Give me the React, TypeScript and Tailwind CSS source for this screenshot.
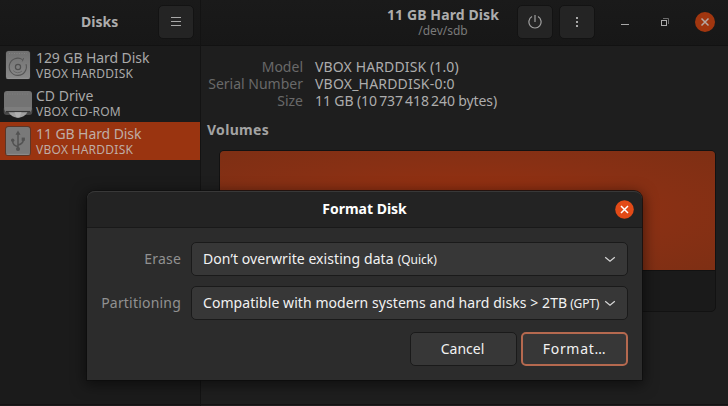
import type { ReactNode } from 'react';

function HardDiskIcon() {
  return (
    <svg width="36" height="38" viewBox="0 0 36 38" className="shrink-0">
      <defs>
        <linearGradient id="hdd" x1="0" y1="0" x2="0" y2="1">
          <stop offset="0" stopColor="#707070" />
          <stop offset="1" stopColor="#8a8a8a" />
        </linearGradient>
      </defs>
      <rect x="5.5" y="4.5" width="25" height="29" rx="3" fill="#2a2a2a" />
      <rect x="6" y="5" width="24" height="28" rx="2.5" fill="url(#hdd)" />
      <path d="M6.5 32.3h23" stroke="#9a9a9a" strokeWidth="0.7" />
      <path d="M9 7.5h18" stroke="#828282" strokeDasharray="1 1.5" />
      <path d="M22.5 13.6A8.6 8.6 0 1 0 26 18.2" fill="none" stroke="#555" strokeWidth="1.1" />
      <path d="M23.6 12.2l-1.3 3.2" stroke="#555" strokeWidth="1" />
      <path d="M13.2 24.6a6 6 0 0 0 8.8.4" fill="none" stroke="#686868" />
      <circle cx="18" cy="21" r="2.6" fill="none" stroke="#505050" strokeWidth="1.2" />
    </svg>
  );
}

function CdDriveIcon() {
  return (
    <svg width="36" height="38" viewBox="0 0 36 38" className="shrink-0">
      <rect x="3.7" y="22" width="28.6" height="9" rx="3" fill="#494949" />
      <rect x="4" y="7" width="28" height="20.5" rx="3" fill="#737373" />
      <path d="M5 23h26v4.5H5z" fill="#7d7d7d" />
      <path d="M7 10h22" stroke="#7f7f7f" strokeDasharray="1 1.5" />
      <path d="M6 27.6h24" stroke="#353535" strokeWidth="1.3" />
      <path d="M8.5 28.2h19c-2 3.4-5.3 5.5-9.5 5.5s-7.5-2.1-9.500-5.500z" fill="#a0a0a0" />
      <path d="M14.5 28.2h7l-2 5.3h-3z" fill="#b0b0b0" />
    </svg>
  );
}

function UsbDiskIcon() {
  return (
    <svg width="36" height="38" viewBox="0 0 36 38" className="shrink-0">
      <rect x="5" y="4" width="26" height="30" rx="3.5" fill="#5b3628" />
      <rect x="6" y="5" width="24" height="28" rx="2.5" fill="#797979" />
      <path d="M6.5 32.3h23" stroke="#999" strokeWidth="0.7" />
      <g stroke="#525252" strokeWidth="1.5" fill="none">
        <path d="M18 11v16" />
        <path d="M18 24.5c-3.5-.7-5.300-2-5.300-5.300" />
        <path d="M18 23c3.500-.7 5.300-2 5.300-5.500" />
      </g>
      <path d="M18 8.600l2.500 4.200h-5z" fill="#525252" />
      <circle cx="18" cy="27" r="2" fill="#525252" />
      <circle cx="12.700" cy="18.300" r="1.700" fill="#525252" />
      <rect x="21.700" y="15.600" width="3.200" height="3.200" fill="#525252" />
    </svg>
  );
}

function HeaderButton({ children, label }: { children: ReactNode; label: string }) {
  return (
    <button
      aria-label={label}
      className="flex h-[34px] w-9 shrink-0 items-center justify-center rounded-[5px] border border-[#131313] bg-[#242424]"
    >
      {children}
    </button>
  );
}

function DriveRow({ icon, title, sub, selected }: { icon: ReactNode; title: ReactNode; sub: ReactNode; selected?: boolean }) {
  return (
    <div className={'flex h-[38px] ' + (selected ? 'bg-[#9a3410] text-[#bfada6]' : 'text-[#a9a9a9]')}>
      {icon}
      <div className="pt-0.5 whitespace-nowrap">
        <div className="text-sm leading-[19px]">{title}</div>
        <div className="text-xs leading-[13px] tracking-[0.25px]">{sub}</div>
      </div>
    </div>
  );
}

function Chevron() {
  return (
    <svg width="12" height="12" viewBox="0 0 12 12" className="shrink-0">
      <path d="M1.2 4.2l4.8 4 4.8-4" fill="none" stroke="#d6d6d6" strokeWidth="1.2" />
    </svg>
  );
}

function Combo({ children, note, tight }: { children: ReactNode; note: ReactNode; tight?: boolean }) {
  return (
    <div className="flex h-[34px] w-[437px] items-center rounded-[5px] border border-[#1a1a1a] bg-[#373737] px-[11px] whitespace-nowrap text-[#f2f2f2]">
      <div className="flex flex-1 items-baseline gap-1 leading-[19px]">
        <span className="text-sm tracking-[0.07px]">{children}</span>
        <span className={tight ? '-ml-px text-xs tracking-[-0.2px]' : 'text-xs'}>{note}</span>
      </div>
      <Chevron />
    </div>
  );
}

function FormatDialog() {
  return (
    <div className="absolute top-[191px] left-[87px] flex h-[189px] w-[555px] flex-col rounded-t-[8px] bg-[#2c2c2c] shadow-[0_3px_14px_2px_rgba(0,0,0,0.5),0_0_0_1px_rgba(20,20,20,0.8)]">
      <div className="grid h-[37px] shrink-0 grid-cols-[1fr_auto_1fr] items-center rounded-t-[8px] border-t border-b border-t-[#383838] border-b-[#191919] bg-[#232323]">
        <span />
        <span className="pb-0.5 text-sm leading-[19px] font-bold text-white">Format Disk</span>
        <button aria-label="Close" className="mr-[8.5px] justify-self-end pb-px">
          <svg width="19" height="19" viewBox="0 0 19 19" className="block">
            <circle cx="9.5" cy="9.5" r="9.3" fill="#e24a17" />
            <path d="M6 6l7 7M13 6l-7 7" stroke="#fff" strokeWidth="1.5" />
          </svg>
        </button>
      </div>
      <div className="flex flex-col gap-2.5 pt-3.5">
        <div className="flex items-center">
          <span className="w-[94px] text-right text-sm tracking-[0.2px] text-[#919191]">Erase</span>
          <div className="ml-2.5"><Combo note="(Quick)">Don’t overwrite existing data</Combo></div>
        </div>
        <div className="flex items-center">
          <span className="w-[94px] text-right text-sm tracking-[0.2px] text-[#919191]">Partitioning</span>
          <div className="ml-2.5"><Combo note="(GPT)" tight>Compatible with modern systems and hard disks &gt; 2TB</Combo></div>
        </div>
      </div>
      <div className="mt-3 mr-3.5 flex justify-end gap-1 text-sm text-[#f2f2f2]">
        <button className="h-[34px] w-[107px] rounded-[5px] border border-[#1a1a1a] bg-[#373737] pr-0.5">Cancel</button>
        <button className="h-[34px] w-[107px] rounded-[5px] border-2 border-[#b5694f] bg-[#373737] tracking-[0.7px]">Format…</button>
      </div>
    </div>
  );
}

function InfoRow({ label, children }: { label: string; children: ReactNode }) {
  return (
    <div className="flex h-[17px] text-sm leading-[17px] whitespace-nowrap">
      <span className="w-[102px] text-right text-[#696969]">{label}</span>
      <span className="ml-3 text-[#adadad]">{children}</span>
    </div>
  );
}

export default function App() {
  return (
    <div className="relative flex h-[406px] w-[728px] overflow-hidden bg-[#1e1e1e] font-['Noto_Sans','Open_Sans',sans-serif]">
      <aside className="flex w-[201px] shrink-0 flex-col border-r border-[#131313] bg-[#1b1b1b]">
        <header className="flex h-[46px] items-start border-b border-[#121212] bg-linear-to-b from-[#1a1a1a] to-[#171717] pt-[5px]">
          <div className="flex-1 pt-[7px] pl-[81px] text-sm leading-[19px] font-bold text-[#adadad]">Disks</div>
          <div className="mr-1.5">
            <HeaderButton label="Menu">
              <svg width="10" height="10" viewBox="0 0 10 10" shapeRendering="crispEdges">
                <path d="M0 .5h10M0 4.5h10M0 8.5h10" stroke="#a8a8a8" />
              </svg>
            </HeaderButton>
          </div>
        </header>
        <DriveRow icon={<HardDiskIcon />} title={<span className="tracking-[-0.08px]">129 GB Hard Disk</span>} sub="VBOX HARDDISK" />
        <DriveRow icon={<CdDriveIcon />} title="CD Drive" sub="VBOX CD-ROM" />
        <DriveRow icon={<UsbDiskIcon />} title={<span className="tracking-[-0.08px]">11 GB Hard Disk</span>} sub="VBOX HARDDISK" selected />
      </aside>

      <main className="flex flex-1 flex-col">
        <header className="flex h-[46px] shrink-0 items-start border-b border-[#121212] bg-linear-to-b from-[#1a1a1a] to-[#171717] pt-[5px]">
          <div className="ml-[142px] w-[200px] text-center whitespace-nowrap">
            <div className="text-sm leading-[19px] font-bold tracking-[0.1px] text-[#adadad]">11 GB Hard Disk</div>
            <div className="text-xs leading-[13px] text-[#7a7a7a]">/dev/sdb</div>
          </div>
          <div className="-ml-[26px] flex gap-1.5">
            <HeaderButton label="Power">
              <svg width="14" height="14" viewBox="0 0 14 14">
                <path d="M4 1.6a6.1 6.1 0 1 0 6 0M7 0v7" fill="none" stroke="#a0a0a0" strokeWidth="1.2" />
              </svg>
            </HeaderButton>
            <HeaderButton label="Drive options">
              <svg width="2" height="10" viewBox="0 0 2 10" shapeRendering="crispEdges">
                <path d="M0 0h2v2H0zM0 4h2v2H0zM0 8h2v2H0z" fill="#a8a8a8" />
              </svg>
            </HeaderButton>
          </div>
          <svg width="96" height="34" viewBox="0 0 96 34" className="ml-6">
            <path d="M2 19.5h8" stroke="#a8a8a8" />
            <path d="M44 13.5h5.5v5.5" fill="none" stroke="#6c6c6c" />
            <rect x="42.5" y="15.5" width="5" height="5" fill="none" stroke="#adadad" />
            <circle cx="86" cy="17" r="10" fill="#a1360f" />
            <path d="M82.5 13.5l7 7M89.5 13.5l-7 7" stroke="#b5a8a3" strokeWidth="1.5" />
          </svg>
        </header>
        <section className="pt-3">
          <InfoRow label="Model"><span className="tracking-[0.13px]">VBOX HARDDISK (1.0)</span></InfoRow>
          <InfoRow label="Serial Number"><span className="tracking-[0.2px]">VBOX_HARDDISK-0:0</span></InfoRow>
          <InfoRow label="Size"><span className="tracking-[-0.1px]">11 GB (10{'\u2009'}737{'\u2009'}418{'\u2009'}240 bytes)</span></InfoRow>
        </section>
        <h2 className="mt-[11px] ml-1.5 text-sm leading-[19px] font-bold tracking-[0.3px] text-[#a3a3a3]">Volumes</h2>
        <div className="mt-[11px] ml-[18px] flex h-[162px] w-[497px] flex-col overflow-hidden rounded-[5px] border border-[#121212] bg-[#1a1a1a]">
          <div className="h-[119px] bg-[radial-gradient(ellipse_at_center,#9b300f_0%,#883014_60%,#7e2f14_100%)]" />
          <div className="h-px bg-[#121212]" />
        </div>
      </main>
      <FormatDialog />
      <div className="absolute bottom-px left-0 h-px w-full bg-[#151213]" />
    </div>
  );
}
